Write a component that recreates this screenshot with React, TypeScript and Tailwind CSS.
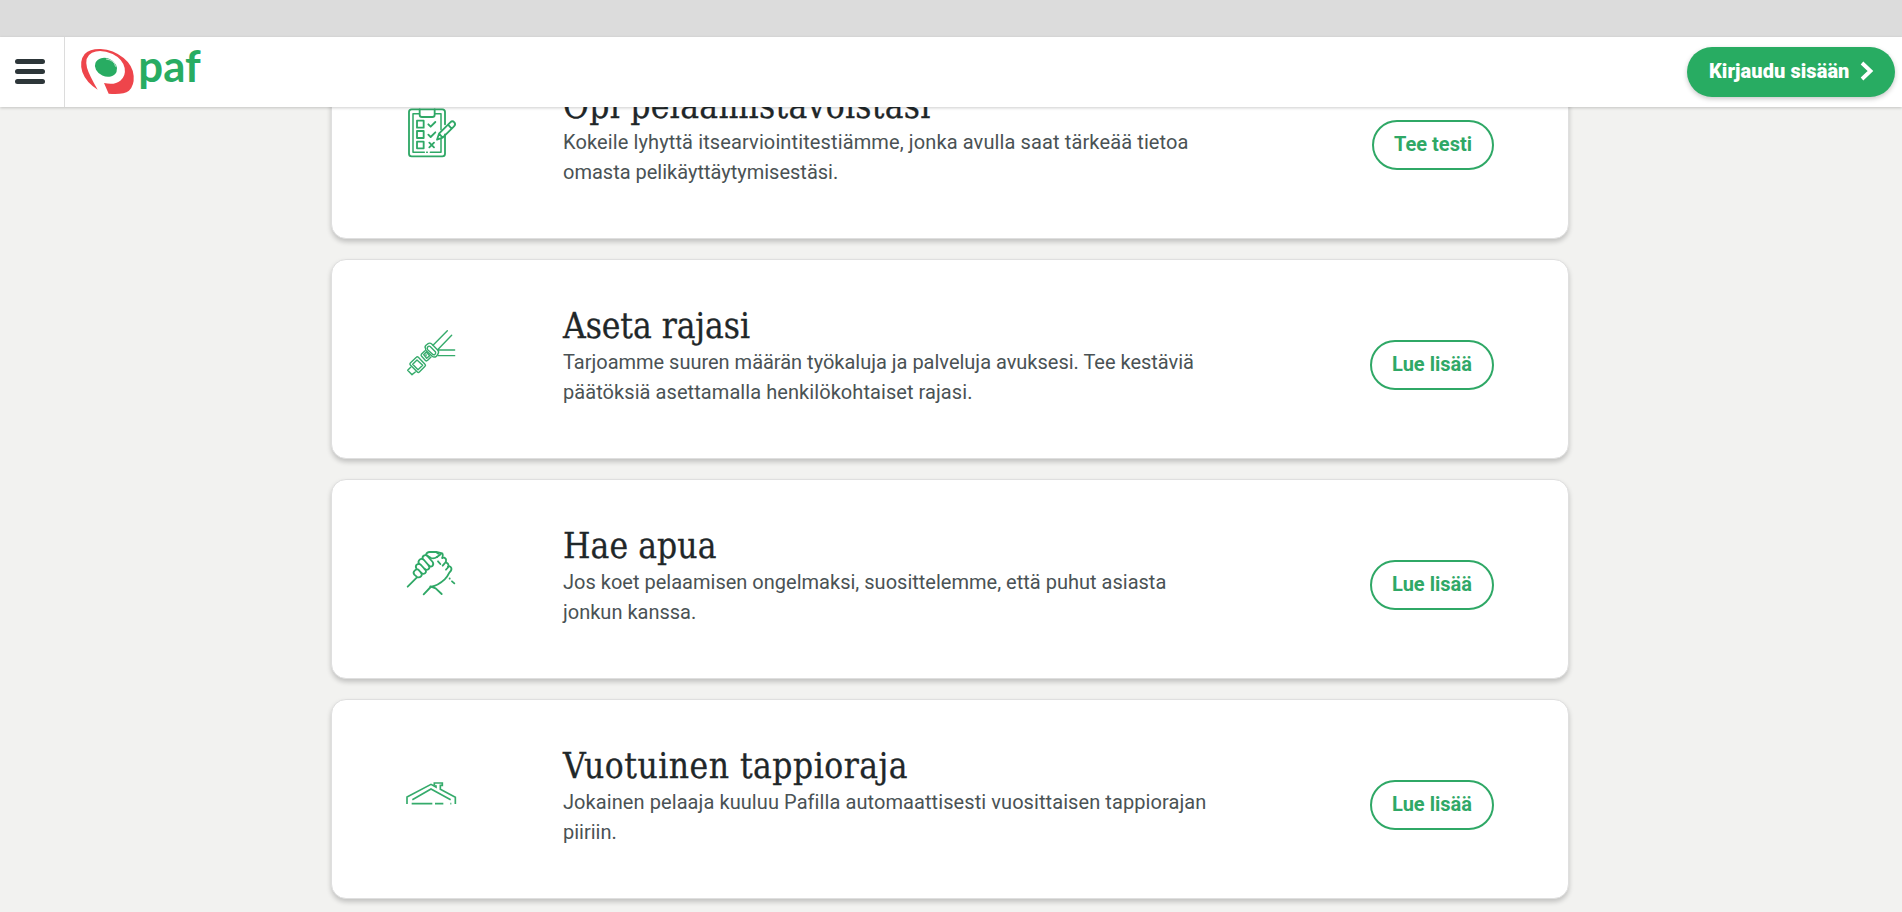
import React from "react";

type Card = {
  title: string;
  titleClass: string;
  lines: { text: string; className: string }[];
  action: string;
  actionClass: string;
  icon: React.ReactNode;
};

const iconClass = "h-[75px] w-[90px]";

const ChecklistIcon = () => (
  <svg className={iconClass} viewBox="0 0 270 225" fill="none" stroke="#2fa866" strokeWidth="5.5" strokeLinecap="round" strokeLinejoin="round">
    <path d="M165 118V176Q165 184 157 184H65Q57 184 57 176V51Q57 43 65 43H157Q165 43 165 51V88" />
    <path d="M89 43V59Q89 66 96 66H127Q134 66 134 59V43" />
    <path d="M88 56H69V172H103M110 172H112M121 172H153V132M134 56H153V104" strokeWidth="4.5" />
    <path d="M81 77H101V98H81ZM81 108H101V129H81ZM81 140H101V160H81Z" />
    <path d="M115 88L122 95L136 81M115 119L122 126L136 112M118 143L132 157M132 143L118 157" />
    <path d="M141 134L147 116L181 82Q187 76 193 82Q198 88 192 94L158 128ZM147 116L158 128M174 89L185 101" />
  </svg>
);

const SeatbeltIcon = () => (
  <svg className={iconClass} viewBox="0 0 270 225" fill="none" stroke="#35ab6b" strokeWidth="4.2" strokeLinecap="round" strokeLinejoin="round">
    <path d="M129 91L172 47M143 104L185 61M145 105H194M144 122H194" />
    <path d="M107 101Q103 96 108 91L114 86Q120 82 126 88L143 105Q148 110 144 117L139 124Q132 129 126 123L107 106Z" />
    <path d="M113 96Q117 91 122 96L136 110Q139 115 135 118Q131 121 127 117L113 104Q110 100 113 96Z" />
    <path d="M104 108L94 118Q92 121 95 124L107 137Q110 139 113 136L123 126M101 119L109 111L119 122L110 130Z" />
    <path d="M108 119V123" />
    <path d="M79 127Q82 124 85 127L105 148Q108 151 105 154L88 171Q85 174 82 171L61 150Q58 147 61 144Z" />
    <path d="M81 135L98 151L84 164L68 148Z" />
    <path d="M62 157L53 166L66 179L76 171" />
  </svg>
);

const HandsIcon = () => (
  <svg className={iconClass} viewBox="0 0 270 225" fill="none" stroke="#2fa866" strokeWidth="5.5" strokeLinecap="round" strokeLinejoin="round">
    <path d="M53 155L80 128M101 178L122 156Q145 151 164 133Q173 124 178 113Q186 106 184 99Q181 92 174 95" />
    <path d="M121 154L137 160L155 177M179 130V131M186 139L193 145" />
    <path d="M74 107Q68 112 73 119L80 125Q87 130 93 124Q98 119 93 113L85 104Q79 101 74 107Z" />
    <path d="M80 102Q75 95 80 89Q87 84 93 90L105 103Q111 110 105 115Q99 119 93 113" />
    <path d="M87 87Q83 79 89 74Q95 69 102 75L116 91Q121 99 115 103Q110 107 104 102" />
    <path d="M98 72Q96 64 103 61Q109 59 114 65L128 81Q132 88 127 93Q122 97 116 91" />
    <path d="M108 60Q110 51 119 51H139L157 55Q160 60 157 69M112 62L123 69Q132 72 141 66M139 52L145 56" />
    <path d="M144 79L151 87M157 69Q163 65 168 73Q170 80 164 85L158 92M168 82Q175 85 176 92Q175 98 168 104M141 66L152 58" />
  </svg>
);

const RoofIcon = () => (
  <svg className={iconClass} viewBox="0 -30 270 225" fill="none" stroke="#35ab6b" strokeWidth="5">
    <path d="M51 117V96L123 58L138 66V61M133 61V54H157V61H151V73L196 97V117" />
    <path d="M67 104L123 72L182 104" />
    <path d="M65 116H127M135 116H160M181 116H184" />
  </svg>
);

const cards: Card[] = [
  {
    title: "Opi pelaamistavoistasi",
    titleClass: "tracking-[0.33px]",
    lines: [
      { text: "Kokeile lyhyttä itsearviointitestiämme, jonka avulla saat tärkeää tietoa", className: "tracking-[0.12px]" },
      { text: "omasta pelikäyttäytymisestäsi.", className: "tracking-[0px]" },
    ],
    action: "Tee testi",
    actionClass: "w-[122px]",
    icon: <ChecklistIcon />,
  },
  {
    title: "Aseta rajasi",
    titleClass: "tracking-[-0.05px]",
    lines: [
      { text: "Tarjoamme suuren määrän työkaluja ja palveluja avuksesi. Tee kestäviä", className: "tracking-[-0.01px]" },
      { text: "päätöksiä asettamalla henkilökohtaiset rajasi.", className: "tracking-[0.07px]" },
    ],
    action: "Lue lisää",
    actionClass: "w-[124px]",
    icon: <SeatbeltIcon />,
  },
  {
    title: "Hae apua",
    titleClass: "tracking-[0.1px]",
    lines: [
      { text: "Jos koet pelaamisen ongelmaksi, suosittelemme, että puhut asiasta", className: "tracking-[0.01px]" },
      { text: "jonkun kanssa.", className: "tracking-[0px]" },
    ],
    action: "Lue lisää",
    actionClass: "w-[124px]",
    icon: <HandsIcon />,
  },
  {
    title: "Vuotuinen tappioraja",
    titleClass: "tracking-[0.5px]",
    lines: [
      { text: "Jokainen pelaaja kuuluu Pafilla automaattisesti vuosittaisen tappiorajan", className: "tracking-[0.08px]" },
      { text: "piiriin.", className: "tracking-[0px]" },
    ],
    action: "Lue lisää",
    actionClass: "w-[124px]",
    icon: <RoofIcon />,
  },
];

const Logo = () => (
  <svg className="mb-[4px] ml-[13px] h-[50px] w-[130px] overflow-visible" viewBox="234 75 390 150">
    <path
      fill="#ee454b"
      d="M293 209Q258 187 247 156Q237 123 254 102Q270 86 302 87Q340 89 371 114Q399 137 401 168Q403 197 387 212Q370 225 326 221L312 189Q344 196 361 182Q378 168 374 144Q368 117 338 102Q302 86 276 98Q253 110 261 143Q267 164 293 209Z"
    />
    <ellipse cx="318" cy="142" rx="34.5" ry="27" transform="rotate(24 318 142)" fill="#28ac62" />
    <path d="M318 117Q343 120 347 140" fill="none" stroke="#fff" strokeWidth="2" />
    <text
      x="415"
      y="187"
      textLength="187"
      lengthAdjust="spacingAndGlyphs"
      fill="#28ac62"
      className="font-['Lato',sans-serif] text-[130px] font-bold"
    >
      paf
    </text>
  </svg>
);

export default function App() {
  return (
    <div className="flex h-screen flex-col overflow-hidden bg-[#f2f2f0] font-['Roboto',sans-serif]">
      <div className="h-[37px] shrink-0 bg-[#dcdcdc]" />
      <header className="relative z-10 flex h-[70px] shrink-0 items-center bg-white shadow-[0_1px_3px_rgba(0,0,0,0.2)]">
        <button aria-label="Menu" className="flex h-full w-[65px] flex-col justify-center gap-[5px] border-r border-[#dcdcdc] pb-[1px] pl-[15px]">
          <span className="h-[5px] w-[30px] rounded-full bg-[#2d3639]" />
          <span className="h-[5px] w-[30px] rounded-full bg-[#2d3639]" />
          <span className="h-[5px] w-[30px] rounded-full bg-[#2d3639]" />
        </button>
        <Logo />
        <button className="mr-[7px] ml-auto flex h-[50px] w-[208px] items-center rounded-full bg-[#28ac62] pb-[2px] pl-[22px] text-[20px] font-black whitespace-nowrap text-white shadow-[0_2px_5px_rgba(0,0,0,0.22)]">
          <span className="w-[151px] text-left tracking-[0.08px]">Kirjaudu sisään</span>
          <svg className="h-5 w-[14px]" viewBox="0 0 14 20" fill="none" stroke="#fff" strokeWidth="3.8">
            <path d="M2 2L10.5 10L2 18" />
          </svg>
        </button>
      </header>
      <main className="-mt-[68px] flex flex-col gap-[20px] pl-[331px]">
        {cards.map((card) => (
          <section
            key={card.title}
            className="flex h-[200px] w-[1238px] shrink-0 items-start rounded-[15px] border border-[#dfdfdf] bg-white shadow-[0_3px_5px_rgba(0,0,0,0.2)]"
          >
            <div className="mt-[55px] ml-[58px] w-[173px] shrink-0">{card.icon}</div>
            <div className="mt-[45px] whitespace-nowrap">
              <h2 className={`h-[42px] font-['DejaVu_Serif_Condensed','DejaVu_Serif',serif] text-[35px] leading-[43px] text-[#1f2729] [-webkit-text-stroke:0.3px_#1f2729] ${card.titleClass}`}>
                {card.title}
              </h2>
              {card.lines.map((line) => (
                <p key={line.text} className={`text-[20px] leading-[30px] text-[#4a5254] ${line.className}`}>
                  {line.text}
                </p>
              ))}
            </div>
            <button
              className={`mt-[80px] mr-[74px] ml-auto h-[50px] rounded-full border-2 border-[#2fa866] pb-[2px] text-[20px] font-bold whitespace-nowrap text-[#2fa866] ${card.actionClass}`}
            >
              {card.action}
            </button>
          </section>
        ))}
      </main>
    </div>
  );
}
